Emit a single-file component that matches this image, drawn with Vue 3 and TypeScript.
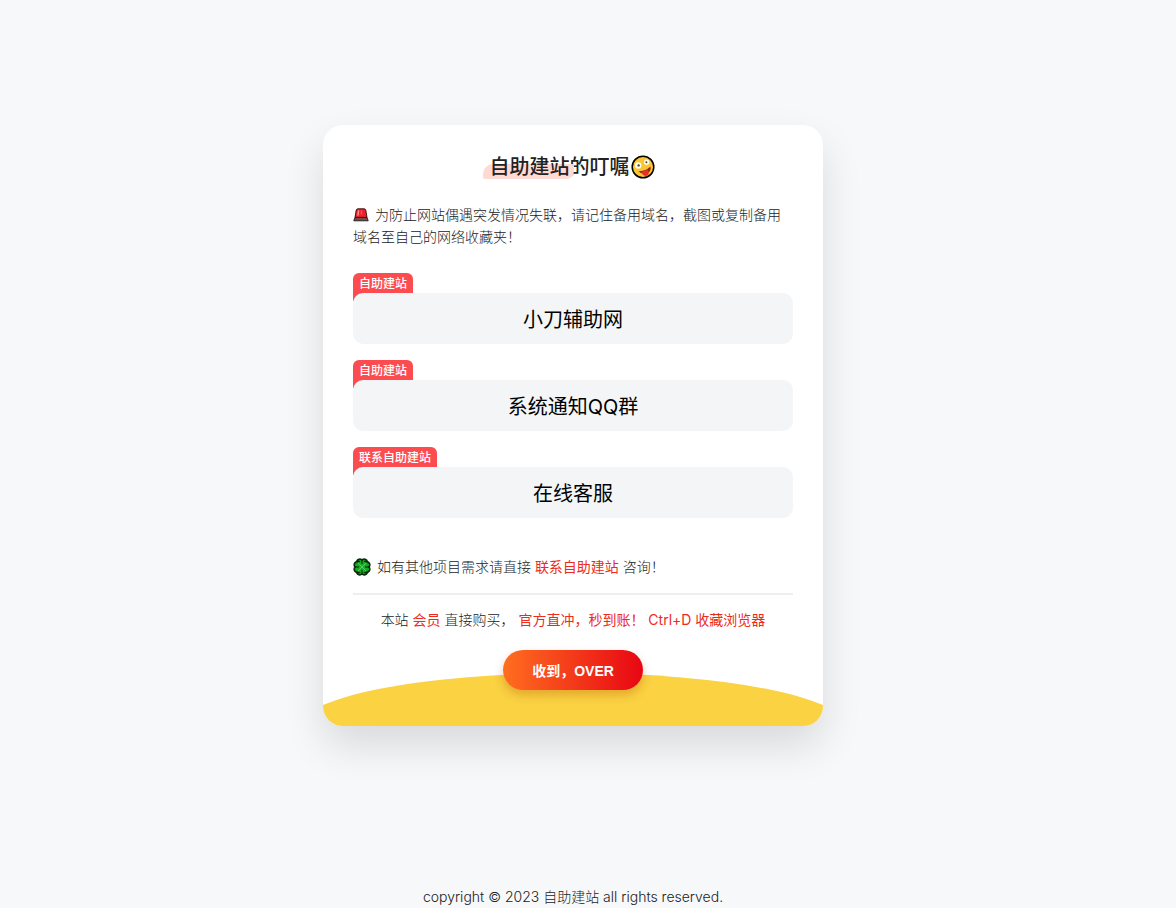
<script setup lang="ts">
interface Entry {
  tag: string
  name: string
}

const entries: Entry[] = [
  { tag: '自助建站', name: '小刀辅助网' },
  { tag: '自助建站', name: '系统通知QQ群' },
  { tag: '联系自助建站', name: '在线客服' },
]
</script>

<template>
  <div class="page">
    <main class="card">
      <h1 class="title">
        <span class="mark">自助建站</span>的叮嘱<svg class="face" viewBox="0 0 24 24" aria-hidden="true">
          <circle cx="12" cy="12" r="10.8" fill="#fcc532" stroke="#000" stroke-width="1.5" />
          <circle cx="7.2" cy="10.4" r="3.2" fill="#fff" />
          <circle cx="15.6" cy="7.2" r="2.6" fill="#fff" />
          <circle cx="7.6" cy="10.4" r="1.2" fill="#5a3a18" />
          <circle cx="15.4" cy="7.2" r="1" fill="#5a3a18" />
          <path d="M7.4 16.2 Q14 16.8 19.4 11.6 Q20.4 16 17 18 Q11.5 20.6 7.4 16.2Z" fill="#8a2a16" />
          <path d="M10.2 17 L16.6 14.6 Q18.9 18.6 16.6 20.6 Q12.6 22.4 10.2 17Z" fill="#ee2b2b" />
        </svg>
      </h1>
      <p class="notice">
        <svg class="siren" viewBox="0 0 16 14" aria-hidden="true">
          <path d="M3.2 2.2 Q3.6 .8 5 .8 H11 Q12.4 .8 12.8 2.2 L14 9.5 H2 Z" fill="#ee2229" stroke="#3a0808" stroke-width=".9" />
          <path d="M5.6 2.4 L4.9 7.6" stroke="#ff9a9a" stroke-width="1.3" />
          <path d="M8.4 2.6 V6.5" stroke="#ff5a5a" stroke-width="1.2" />
          <path d="M2 9.4 H14 L15.2 12.8 H.8 Z" fill="#7d4a4a" stroke="#171717" stroke-width=".9" />
        </svg>
        为防止网站偶遇突发情况失联，请记住备用域名，截图或复制备用域名至自己的网络收藏夹！
      </p>
      <ul class="entries">
        <li v-for="entry in entries" :key="entry.name" class="entry">
          <span class="tag">{{ entry.tag }}</span>
          <a class="name" href="#">{{ entry.name }}</a>
        </li>
      </ul>
      <p class="contact">
        <svg class="clover" viewBox="0 0 18 18" aria-hidden="true">
          <g fill="#12a022" stroke="#062808" stroke-width="1.4" stroke-linejoin="round">
            <path d="M9 9 L3.5 6.5 Q3 2 6 1.2 Q8.4 .6 9 2.6 Q9.6 .6 12 1.2 Q15 2 14.5 6.5 Z" />
            <path d="M9 9 L3.5 11.5 Q3 16 6 16.8 Q8.4 17.4 9 15.4 Q9.6 17.4 12 16.8 Q15 16 14.5 11.5 Z" />
            <path d="M9 9 L6.5 3.5 Q2 3 1.2 6 Q.6 8.4 2.6 9 Q.6 9.6 1.2 12 Q2 15 6.5 14.5 Z" />
            <path d="M9 9 L11.5 3.5 Q16 3 16.8 6 Q17.4 8.4 15.4 9 Q17.4 9.6 16.8 12 Q16 15 11.5 14.5 Z" />
          </g>
          <circle cx="9" cy="9" r="5.8" fill="#18ac28" />
          <path d="M9 2.8 V6 M9 12 V15.2 M2.8 9 H6 M12 9 H15.2" stroke="#062808" stroke-width="1" />
          <path d="M5 5 L13 13 M13 5 L5 13" stroke="#62cf5a" stroke-width=".9" />
        </svg>
        如有其他项目需求请直接 <a href="#">联系自助建站</a> 咨询！
      </p>
      <p class="promo">
        本站 <a href="#">会员</a> 直接购买， <strong>官方直冲，秒到账！ Ctrl+D 收藏浏览器</strong>
      </p>
      <div class="action">
        <button type="button" class="confirm">收到，OVER</button>
      </div>
    </main>
    <footer class="copyright">copyright © 2023 自助建站 all rights reserved.</footer>
  </div>
</template>

<style>
body {
  margin: 0;
  background: #f7f8fa;
}
</style>

<style scoped>
.page {
  box-sizing: border-box;
  min-height: 100vh;
  padding: 125px 30px 0 0;
  display: flex;
  flex-direction: column;
  align-items: center;
  justify-content: space-between;
  gap: 40px;
  overflow: hidden;
  font-family: Inter, "Noto Sans CJK SC", sans-serif;
  font-size: 14px;
  line-height: 22px;
  font-weight: 300;
  color: #222;
}
.card {
  box-sizing: border-box;
  position: relative;
  width: 100%;
  max-width: 500px;
  padding: 25px 30px 36px;
  border-radius: 20px;
  background: #fff;
  box-shadow: 0 20px 40px rgba(0, 0, 0, 0.12);
  overflow: hidden;
}
.card::after {
  content: "";
  position: absolute;
  left: -5%;
  right: -5%;
  bottom: -57px;
  height: 110px;
  border-radius: 50%;
  background: #fad242;
}
.title {
  margin: 0;
  display: flex;
  justify-content: center;
  align-items: center;
  font-size: 20px;
  line-height: 34px;
  font-weight: 500;
  color: #222;
}
.mark {
  position: relative;
  z-index: 0;
}
.mark::before {
  content: "";
  position: absolute;
  z-index: -1;
  left: -7px;
  right: -4px;
  bottom: 5px;
  height: 15px;
  border-radius: 10px 2px 8px 2px;
  background: #ffdad3;
}
.face {
  width: 24px;
  height: 24px;
  margin: 0 2px 0 1px;
}
.notice {
  margin: 20px 0 25px;
}
.siren {
  width: 16px;
  height: 14px;
  margin-right: 2px;
  vertical-align: -2px;
}
.entries {
  margin: 0;
  padding: 0;
  list-style: none;
  display: grid;
  gap: 16px;
}
.entry {
  display: flex;
  flex-direction: column;
  align-items: flex-start;
}
.tag {
  margin-bottom: -8px;
  padding: 2px 6px 8px;
  border-radius: 6px 6px 0 0;
  background: #fd4c50;
  color: #fff;
  font-size: 12px;
  line-height: 18px;
  font-weight: 500;
}
.name {
  position: relative;
  align-self: stretch;
  padding-top: 3px;
  border-radius: 10px;
  background: #f3f5f7;
  color: #000;
  font-size: 20px;
  line-height: 48px;
  font-weight: 400;
  text-align: center;
  text-decoration: none;
}
.contact {
  margin: 38px 0 15px;
}
.clover {
  width: 18px;
  height: 18px;
  margin-right: 2px;
  vertical-align: -4px;
}
.contact a,
.promo a,
.promo strong {
  color: #ed2b1c;
  font-weight: 400;
  text-decoration: none;
}
.promo {
  margin: 0;
  padding-top: 14px;
  border-top: 2px solid #eee;
  text-align: center;
}
.action {
  position: relative;
  z-index: 1;
  margin-top: 19px;
  display: flex;
  justify-content: center;
}
.confirm {
  height: 40px;
  padding: 0 29px;
  border: 0;
  border-radius: 20px;
  background: linear-gradient(90deg, #ff6e20, #e80613);
  box-shadow: 0 5px 10px rgba(180, 70, 0, 0.3);
  color: #fff;
  font-family: "Liberation Sans", "Noto Sans CJK SC", sans-serif;
  font-size: 14px;
  font-weight: 700;
}
</style>
